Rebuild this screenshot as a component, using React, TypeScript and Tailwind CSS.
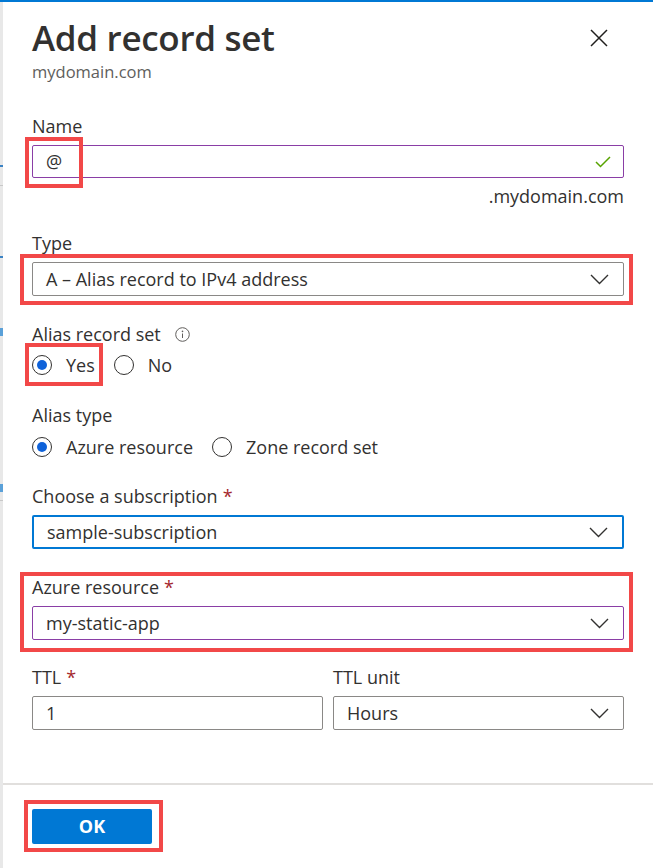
import React from 'react'

const font = { fontFamily: '"Segoe UI", "Open Sans", "Noto Sans", sans-serif' }

function Chevron() {
  return (
    <svg width="19" height="11" viewBox="0 0 19 11" className="flex-shrink-0">
      <path d="M1 1 L9.5 9.5 L18 1" fill="none" stroke="#323130" strokeWidth="1.4" />
    </svg>
  )
}

function Label({ text, required }: { text: string; required?: boolean }) {
  return (
    <div className="text-[18px] leading-[22px] text-[#323130]">
      {text}
      {required && <span className="text-[#a4262c] ml-[5px]">*</span>}
    </div>
  )
}

function Dropdown({ value, border }: { value: string; border: string }) {
  return (
    <div className={`mt-[8px] h-[34px] flex items-center justify-between pl-[13px] pr-[14px] rounded-[2px] ${border}`}>
      <span className="text-[18px] text-[#323130]">{value}</span>
      <Chevron />
    </div>
  )
}

function Radio({ label, checked }: { label: string; checked?: boolean }) {
  return (
    <div className="flex items-center gap-[14px]">
      <div className="w-[20px] h-[20px] rounded-full border border-[#323130] flex items-center justify-center">
        {checked && <div className="w-[10px] h-[10px] rounded-full bg-[#0f62d9]" />}
      </div>
      <span className="text-[18px] text-[#323130]">{label}</span>
    </div>
  )
}

export default function App() {
  return (
    <div className="w-[653px] h-[868px] bg-white flex flex-col relative overflow-hidden" style={font}>
      <div className="h-[2px] bg-[#0078d4]" />
      <div className="flex flex-1">
        {/* strip of the page behind */}
        <div className="w-[3px] bg-[#e8e8e8] flex flex-col">
          <div className="h-[163px]" />
          <div className="h-[2px] bg-[#3b82c4]" />
          <div className="h-[18px]" />
          <div className="h-[1px] bg-[#c8c8c8]" />
          <div className="h-[70px]" />
          <div className="h-[2px] bg-[#3b82c4]" />
          <div className="h-[70px]" />
          <div className="h-[8px] bg-[#5aa0d8]" />
          <div className="h-[148px]" />
          <div className="h-[8px] bg-[#5aa0d8]" />
          <div className="h-[8px]" />
          <div className="h-[1px] bg-[#c8c8c8]" />
          <div className="flex-1" />
        </div>

        <div className="flex-1 flex flex-col">
          <div className="px-[29px] flex flex-col">
            {/* Header */}
            <div className="pt-[16px] flex items-center justify-between">
              <h1 className="text-[35px] leading-[40px] font-semibold text-[#323130] tracking-[-0.3px]">Add record set</h1>
              <svg width="18" height="18" viewBox="0 0 18 18" className="mr-[16px]">
                <path d="M1 1 L17 17 M17 1 L1 17" stroke="#201f1e" strokeWidth="1.5" />
              </svg>
            </div>
            <div className="mt-[4px] text-[16.5px] leading-[20px] text-[#605e5c]">mydomain.com</div>

            {/* Name */}
            <div className="mt-[33px]">
              <Label text="Name" />
              <div className="mt-[8px] h-[33px] flex items-center justify-between pl-[13px] pr-[12px] rounded-[2px] border border-[#8a3ea6]">
                <span className="text-[18px] text-[#323130]">@</span>
                <svg width="16" height="12" viewBox="0 0 16 12">
                  <path d="M1 6 L5.5 10.5 L15 1" fill="none" stroke="#57a300" strokeWidth="1.5" />
                </svg>
              </div>
              <div className="mt-[7px] text-right text-[18px] leading-[22px] text-[#323130]">.mydomain.com</div>
            </div>

            {/* Type */}
            <div className="mt-[25px]">
              <Label text="Type" />
              <Dropdown value="A – Alias record to IPv4 address" border="border border-[#8a8886]" />
            </div>

            {/* Alias record set */}
            <div className="mt-[27px]">
              <div className="flex items-center gap-[14px]">
                <Label text="Alias record set" />
                <svg width="15" height="15" viewBox="0 0 15 15">
                  <circle cx="7.5" cy="7.5" r="6.8" fill="none" stroke="#605e5c" strokeWidth="1" />
                  <circle cx="7.5" cy="4.4" r="0.8" fill="#605e5c" />
                  <path d="M7.5 6.5 V11" stroke="#605e5c" strokeWidth="1" />
                </svg>
              </div>
              <div className="mt-[8px] h-[24px] flex items-center gap-[19px]">
                <Radio label="Yes" checked />
                <Radio label="No" />
              </div>
            </div>

            {/* Alias type */}
            <div className="mt-[27px]">
              <Label text="Alias type" />
              <div className="mt-[9px] h-[24px] flex items-center gap-[19px]">
                <Radio label="Azure resource" checked />
                <Radio label="Zone record set" />
              </div>
            </div>

            {/* Subscription */}
            <div className="mt-[26px]">
              <Label text="Choose a subscription" required />
              <Dropdown value="sample-subscription" border="border-2 border-[#0078d4]" />
            </div>

            {/* Azure resource */}
            <div className="mt-[27px]">
              <Label text="Azure resource" required />
              <Dropdown value="my-static-app" border="border border-[#8a3ea6]" />
            </div>

            {/* TTL */}
            <div className="mt-[26px] flex gap-[10px]">
              <div className="flex-1">
                <Label text="TTL" required />
                <div className="mt-[8px] h-[34px] flex items-center pl-[13px] rounded-[2px] border border-[#8a8886]">
                  <span className="text-[18px] text-[#323130]">1</span>
                </div>
              </div>
              <div className="flex-1">
                <Label text="TTL unit" />
                <Dropdown value="Hours" border="border border-[#8a8886]" />
              </div>
            </div>
          </div>

          <div className="flex-1" />

          {/* Footer */}
          <div className="border-t-2 border-[#e1dfdd] h-[85px] px-[29px] pt-[24px]">
            <button className="w-[120px] h-[35px] rounded-[2px] bg-[#0078d4] text-white text-[18px] font-bold">OK</button>
          </div>
        </div>
      </div>

      {/* annotation boxes */}
      <div className="absolute left-[25px] top-[137px] w-[58px] h-[51px] border-4 border-[#f24848]" />
      <div className="absolute left-[20px] top-[254px] w-[613px] h-[51px] border-4 border-[#f24848]" />
      <div className="absolute left-[25px] top-[343px] w-[78px] h-[43px] border-4 border-[#f24848]" />
      <div className="absolute left-[20px] top-[572px] w-[613px] h-[80px] border-4 border-[#f24848]" />
      <div className="absolute left-[24px] top-[800px] w-[139px] h-[52px] border-4 border-[#f24848]" />
    </div>
  )
}
